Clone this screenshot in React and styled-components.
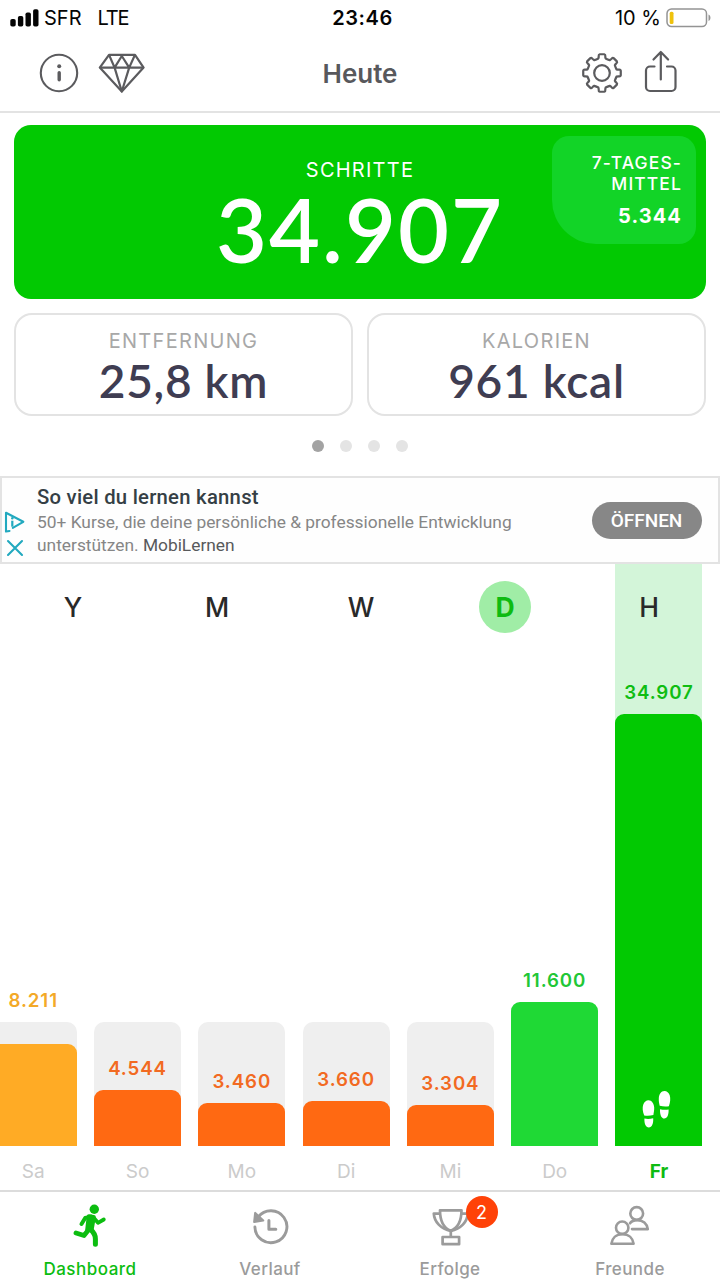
import React from "react";
import styled, { createGlobalStyle } from "styled-components";

const GlobalStyle = createGlobalStyle`
  * {
    box-sizing: border-box;
  }
  body {
    margin: 0;
    background: #fff;
    font-family: Inter, "Liberation Sans", sans-serif;
  }
`;

const Screen = styled.div`
  width: 720px;
  height: 1280px;
  display: flex;
  flex-direction: column;
  overflow: hidden;
  background: #fff;
`;

const StatusBar = styled.div`
  height: 37px;
  padding: 0 8px 2px 10px;
  display: grid;
  grid-template-columns: 1fr auto 1fr;
  align-items: center;
  font-size: 20px;
  color: #050505;
`;

const StatusGroup = styled.div`
  display: flex;
  align-items: center;
  justify-content: ${(p) => (p.$end ? "flex-end" : "flex-start")};
  gap: 5px;
  svg {
    flex: none;
  }
`;

const Carrier = styled.span`
  letter-spacing: 0;
`;

const Network = styled.span`
  margin-left: 11px;
  letter-spacing: -1.2px;
`;

const Clock = styled.div`
  font-weight: 600;
  letter-spacing: 0.6px;
  padding-left: 3px;
`;

const Header = styled.header`
  height: 76px;
  padding: 0 41px 2px 38px;
  display: grid;
  grid-template-columns: 1fr auto 1fr;
  align-items: center;
  border-bottom: 2px solid #e3e3e3;
`;

const Actions = styled.div`
  display: flex;
  align-items: center;
  justify-content: ${(p) => (p.$end ? "flex-end" : "flex-start")};
  gap: ${(p) => p.$gap}px;
`;

const Title = styled.h1`
  margin: 0;
  padding-left: 3px;
  font-size: 26px;
  font-weight: 600;
  letter-spacing: 0;
  color: #58585c;
`;

const StepsCard = styled.section`
  margin: 12px 14px 0;
  height: 174px;
  padding: 11px 10px 10px;
  border-radius: 17px;
  background: #02c902;
  color: #fff;
  display: grid;
  grid-template-columns: 144px 1fr 144px;
`;

const StepsMain = styled.div`
  grid-column: 2;
  display: flex;
  flex-direction: column;
  align-items: center;
  padding-top: 22px;
`;

const StepsLabel = styled.div`
  font-size: 20px;
  line-height: 24px;
  letter-spacing: 1.25px;
`;

const StepsValue = styled.div`
  margin-top: 10px;
  font-family: Lato, sans-serif;
  font-size: 88px;
  font-weight: 600;
  line-height: 74px;
  letter-spacing: 2px;
`;

const Average = styled.div`
  height: 108px;
  padding: 16px 14px 0 0;
  border-radius: 17px 17px 17px 44px;
  background: #12d427;
  text-align: right;
  font-size: 17.5px;
  font-weight: 500;
  line-height: 21px;
  letter-spacing: 1.1px;
`;

const AverageValue = styled.div`
  margin-top: 11px;
  font-size: 20px;
  font-weight: 700;
  line-height: 23px;
  letter-spacing: 1.1px;
`;

const Stats = styled.div`
  display: grid;
  grid-template-columns: 1fr 1fr;
  gap: 14px;
  margin: 14px 14px 0;
`;

const StatCard = styled.section`
  height: 103px;
  padding-top: 14px;
  border: 2px solid #e3e3e3;
  border-radius: 18px;
  text-align: center;
`;

const StatLabel = styled.div`
  font-size: 20px;
  line-height: 24px;
  letter-spacing: 1.3px;
  color: #a8a8a8;
`;

const StatValue = styled.div`
  font-family: Lato, sans-serif;
  font-size: 46px;
  font-weight: 600;
  line-height: 56px;
  letter-spacing: 0.75px;
  color: #3f3d52;
`;

const Dots = styled.div`
  height: 60px;
  display: flex;
  align-items: center;
  justify-content: center;
  gap: 16px;
`;

const Dot = styled.span`
  width: 12px;
  height: 12px;
  border-radius: 50%;
  background: ${(p) => (p.$active ? "#a3a3a3" : "#e4e4e4")};
`;

const Ad = styled.aside`
  height: 88px;
  display: flex;
  border: 2px solid #e3e3e3;
  background: #fefefe;
  font-family: Roboto, sans-serif;
`;

const AdMarks = styled.div`
  width: 35px;
  padding: 33px 0 0 2px;
  display: flex;
  flex-direction: column;
  gap: 6px;
`;

const AdText = styled.div`
  flex: 1;
  padding-top: 7px;
  font-size: 17.35px;
  line-height: 23px;
  color: #868686;
  b {
    font-weight: 400;
    color: #58595b;
  }
`;

const AdTitle = styled.div`
  font-size: 20.3px;
  font-weight: 500;
  line-height: 24px;
  letter-spacing: 0.25px;
  padding-bottom: 2px;
  color: #353f45;
`;

const AdButton = styled.button`
  width: 110px;
  height: 37px;
  margin: 24px 16px 0 0;
  padding: 0 1px 1px 0;
  border: 0;
  border-radius: 19px;
  background: #878787;
  color: #fff;
  font: 500 19px Roboto, sans-serif;
`;

const ChartArea = styled.main`
  height: 626px;
  display: grid;
  grid-template: 582px 44px / 720px;
`;

const Columns = styled.div`
  grid-area: 1 / 1;
  display: grid;
  grid-template-columns: repeat(7, 87px);
  column-gap: 17.3px;
  margin-left: -10.3px;
`;

const Track = styled.div`
  align-self: end;
  height: ${(p) => p.$height}px;
  border-radius: ${(p) => (p.$today ? 0 : "10px 10px 0 0")};
  background: ${(p) => (p.$today ? "#d3f5d9" : "#efefef")};
  display: flex;
  flex-direction: column;
  justify-content: flex-end;
`;

const BarValue = styled.div`
  margin-bottom: 9px;
  text-align: center;
  font-size: 18.7px;
  font-weight: 600;
  line-height: 24px;
  letter-spacing: 0.9px;
  color: ${(p) => p.$color};
`;

const Bar = styled.div`
  height: ${(p) => p.$height}px;
  border-radius: 9px 9px 0 0;
  background: ${(p) => p.$color};
  display: flex;
  align-items: flex-end;
  justify-content: center;
  padding: 0 3px 17px 0;
`;

const ColumnStack = styled.div`
  display: flex;
  flex-direction: column;
  justify-content: flex-end;
  ${Track} {
    align-self: stretch;
  }
`;

const Ranges = styled.div`
  grid-area: 1 / 1;
  align-self: start;
  display: grid;
  grid-template-columns: repeat(5, 144px);
  justify-items: center;
  padding: 17px 0 0 1px;
`;

const Range = styled.div`
  width: 52px;
  height: 52px;
  border-radius: 50%;
  background: ${(p) => (p.$active ? "#a0eda6" : "transparent")};
  color: ${(p) => (p.$active ? "#0ebb12" : "#292929")};
  font-size: 26.5px;
  font-weight: ${(p) => (p.$active ? 700 : 500)};
  line-height: 53px;
  text-align: center;
`;

const Days = styled.div`
  display: grid;
  grid-template-columns: repeat(7, 87px);
  column-gap: 17.3px;
  margin-left: -10.3px;
  padding-top: 14px;
`;

const Day = styled.div`
  text-align: center;
  font-size: 19px;
  font-weight: ${(p) => (p.$active ? 700 : 400)};
  line-height: 24px;
  color: ${(p) => (p.$active ? "#0ebb12" : "#cbcbcb")};
`;

const TabBar = styled.nav`
  height: 90px;
  display: grid;
  grid-template-columns: repeat(4, 1fr);
  border-top: 2px solid #dcdcdc;
`;

const Tab = styled.div`
  display: flex;
  flex-direction: column;
  align-items: center;
  padding-top: 10px;
  color: ${(p) => (p.$active ? "#0cbd10" : "#9b9b9b")};
  font-size: 17px;
  font-weight: 500;
  line-height: 24px;
  letter-spacing: ${(p) => (p.$active ? 0.5 : 0.4)}px;
`;

const TabIcon = styled.div`
  position: relative;
  height: 55px;
`;

const Badge = styled.span`
  position: absolute;
  top: -6px;
  left: 35.5px;
  width: 32px;
  height: 32px;
  border-radius: 50%;
  background: #ff4208;
  color: #fff;
  font-size: 18px;
  font-weight: 400;
  line-height: 33px;
  letter-spacing: 0;
  text-align: center;
`;

const SignalIcon = () => (
  <svg width="29" height="18" viewBox="0 0 29 18" fill="#050505">
    <rect x="0.3" y="10" width="5.4" height="7.5" rx="1.8" />
    <rect x="7.9" y="7" width="5.4" height="10.5" rx="1.8" />
    <rect x="15.5" y="3.5" width="5.4" height="14" rx="1.8" />
    <rect x="23.1" y="0.3" width="5.4" height="17.2" rx="1.8" />
  </svg>
);

const BatteryIcon = () => (
  <svg width="46" height="20" viewBox="0 0 46 20">
    <rect x="1" y="1" width="39.5" height="17.5" rx="4.5" fill="none" stroke="#949494" strokeWidth="1.5" />
    <rect x="3.7" y="3.7" width="3.8" height="12.2" rx="1.5" fill="#efc20c" />
    <path d="M42.5 6.5c2.6 1 2.6 5.5 0 6.5z" fill="#949494" />
  </svg>
);

const InfoIcon = () => (
  <svg width="42" height="40" viewBox="0 0 42 40" fill="none" stroke="#5b5b5e">
    <circle cx="21" cy="20" r="18.2" strokeWidth="2.1" />
    <path d="M21.2 19.8v7" strokeWidth="3.4" strokeLinecap="round" />
    <circle cx="21.2" cy="13.3" r="2" fill="#5b5b5e" stroke="none" />
  </svg>
);

const DiamondIcon = () => (
  <svg width="48" height="40" viewBox="0 0 48 40" fill="none" stroke="#5b5b5e" strokeWidth="2.2" strokeLinejoin="round">
    <path d="M11 1.8h26l8.6 12.8L23.8 38.5 1.8 14.6z" />
    <path d="M1.8 14.6h43.8M11 1.8l5.6 12.8L23.8 3l7.4 11.6L37 1.8M16.6 14.6l7.2 23.9 7.4-23.9" />
  </svg>
);

const polar = (r, deg) => {
  const a = (deg * Math.PI) / 180;
  return `${(21 + r * Math.cos(a)).toFixed(2)} ${(21 + r * Math.sin(a)).toFixed(2)}`;
};

// eight teeth, every one joined to the next by a shallow valley
const gearPath =
  [0, 1, 2, 3, 4, 5, 6, 7]
    .map((i) => {
      const a = i * 45 - 90;
      return (
        `${i ? "L" : "M"}${polar(15, a - 14)} Q${polar(16, a - 11.5)} ${polar(17.3, a - 11)}` +
        ` Q${polar(18.9, a - 10.5)} ${polar(18.9, a - 7)} L${polar(18.9, a + 7)}` +
        ` Q${polar(18.9, a + 10.5)} ${polar(17.3, a + 11)} Q${polar(16, a + 11.5)} ${polar(15, a + 14)}` +
        ` Q${polar(14.6, a + 22.5)} ${polar(15, a + 31)}`
      );
    })
    .join(" ") + "Z";

const GearIcon = () => (
  <svg width="42" height="42" viewBox="0 0 42 42" fill="none" stroke="#5b5b5e" strokeWidth="2.2" strokeLinejoin="round">
    <path d={gearPath} />
    <circle cx="21" cy="21" r="7.8" />
  </svg>
);

const ShareIcon = () => (
  <svg width="36" height="46" viewBox="0 0 36 46" fill="none" stroke="#5b5b5e" strokeWidth="2.2" strokeLinecap="round" strokeLinejoin="round">
    <path d="M11.5 16.5H7a4 4 0 0 0-4 4v16.500a4 4 0 0 0 4 4h21.500a4 4 0 0 0 4-4V20.500a4 4 0 0 0-4-4H24" />
    <path d="M17.8 29.500V2M10.500 9.500L17.8 2l7.300 7.500" />
  </svg>
);

const AdChoicesIcon = () => (
  <svg width="22" height="22" viewBox="0 0 22 22" fill="none" stroke="#22a9bf" strokeWidth="2.1" strokeLinejoin="round">
    <path d="M5.500 20l-3.500.5V1.800L19.300 10.800l-10.500 6" strokeLinecap="round" />
    <path d="M8.3 9.700v6" strokeWidth="2.2" />
    <circle cx="8.300" cy="7.200" r="1.200" fill="#22a9bf" stroke="none" />
  </svg>
);

const CloseIcon = () => (
  <svg width="22" height="18" viewBox="0 0 22 18" fill="none" stroke="#22a9bf" strokeWidth="2.100" strokeLinecap="round">
    <path d="M4 2l14 14M18 2L4 16" />
  </svg>
);

const StepsIcon = () => (
  <svg width="30" height="40" viewBox="0 0 30 40" fill="#fff">
    <path d="M2.200 26.500C.6 22.500.2 18.500 1.300 15.500 2.200 12.800 4.200 11.200 6.500 11.200c3.300 0 5.500 3.300 5.700 7.300.1 3-.5 5.400-.8 7.500-3 .8-6 1-9.200.5z" />
    <path d="M2.400 29.600c2.900.5 5.900.4 8.800-.3.3 5.500-1.200 9.100-4.400 9.100-3 0-4.600-3.400-4.400-8.800z" />
    <path d="M17.700 16.800c-.5-2.300-1.100-4.600-.9-7.500C17 5.300 19 2 22.400 2c2.500 0 4.400 1.700 5.300 4.300 1 3.200.6 7-.8 11-3.200.4-6.200.3-9.200-.5z" />
    <path d="M18 20.200c2.800.7 5.700.8 8.600.4.200 5.200-1.200 8.900-4.300 8.900-3 0-4.500-3.800-4.300-9.300z" />
  </svg>
);

const RunnerIcon = () => (
  <svg width="36" height="46" viewBox="0 0 36 46" fill="none" stroke="currentColor" strokeLinecap="round" strokeLinejoin="round">
    <circle cx="22.300" cy="7.300" r="4.700" fill="currentColor" stroke="none" />
    <path d="M19 14.600l-5.800 1.400L9.500 22" strokeWidth="4" />
    <path d="M21.500 15.500l4.500 5.300 5.800-3.300" strokeWidth="3.800" />
    <path d="M17 14.500l4.500.8-2 11.500-4 1z" fill="currentColor" strokeWidth="4.600" />
    <path d="M16 28.500l-4 5-8-2.500" strokeWidth="4.800" />
    <path d="M18.500 27.500c3.500 3 5 6 4.900 9.500v5.300" strokeWidth="5" />
  </svg>
);

const HistoryIcon = () => (
  <svg width="40" height="46" viewBox="0 0 40 46" fill="none" stroke="currentColor" strokeWidth="2.900" strokeLinecap="round" strokeLinejoin="round">
    <path d="M8.200 15A16 16 0 1 1 4.900 25" />
    <path d="M5.200 11l-1 9 9-1.500z" fill="currentColor" strokeWidth="2.200" />
    <path d="M18.900 18.500v8.800h6.900" strokeWidth="3" />
  </svg>
);

const TrophyIcon = () => (
  <svg width="40" height="46" viewBox="0 0 40 46" fill="none" stroke="currentColor" strokeWidth="2.700" strokeLinejoin="round">
    <path d="M10 8.300h21.500c0 9.500-3.300 17.500-10.700 20.500C13.300 26 10 18 10 8.300z" />
    <path d="M10 11.600H3.800c.5 8.200 7 15.500 17 17.200 10-1.700 16.500-9 17-17.200h-6.300" />
    <path d="M20.800 29v6M12.600 35h16.500v7.200H12.600z" />
  </svg>
);

const FriendsIcon = () => (
  <svg width="42" height="46" viewBox="0 0 42 46" fill="none" stroke="currentColor" strokeWidth="2.600" strokeLinecap="round" strokeLinejoin="round">
    <circle cx="27.700" cy="11.500" r="6.400" />
    <path d="M21 21.300c1.500-2.200 4-3.200 7-3.200 6 0 10 3.600 10.800 9H23" />
    <circle cx="13.200" cy="25.700" r="6.200" />
    <path d="M2.400 41.700c.7-5.500 4.500-9.500 11-9.500s10.500 4 11.200 9.500z" />
  </svg>
);

const days = [
  { day: "Sa", value: "8.211", height: 102, color: "#ffab25", text: "#f3a928", over: true },
  { day: "So", value: "4.544", height: 56, color: "#ff6912", text: "#f26a22" },
  { day: "Mo", value: "3.460", height: 43, color: "#ff6912", text: "#f26a22" },
  { day: "Di", value: "3.660", height: 45, color: "#ff6912", text: "#f26a22" },
  { day: "Mi", value: "3.304", height: 41, color: "#ff6912", text: "#f26a22" },
  { day: "Do", value: "11.600", height: 144, color: "#1fd935", text: "#22c736", over: true },
  { day: "Fr", value: "34.907", height: 432, color: "#02c902", text: "#0fbd12", today: true },
];

const GOAL_HEIGHT = 124;

const tabs = [
  { name: "Dashboard", Icon: RunnerIcon, active: true },
  { name: "Verlauf", Icon: HistoryIcon },
  { name: "Erfolge", Icon: TrophyIcon, badge: 2 },
  { name: "Freunde", Icon: FriendsIcon },
];

const DayColumn = ({ item }) => {
  const bar = (
    <Bar $height={item.height} $color={item.color}>
      {item.today && <StepsIcon />}
    </Bar>
  );
  const value = <BarValue $color={item.text}>{item.value}</BarValue>;

  // the number never overlaps the goal line, it moves above the column
  if (item.over) {
    return (
      <ColumnStack>
        {value}
        <Track $height={Math.max(GOAL_HEIGHT, item.height)}>{bar}</Track>
      </ColumnStack>
    );
  }

  return (
    <Track $height={item.today ? 582 : GOAL_HEIGHT} $today={item.today}>
      {value}
      {bar}
    </Track>
  );
};

function App() {
  return (
    <Screen>
      <GlobalStyle />
      <StatusBar>
        <StatusGroup>
          <SignalIcon />
          <Carrier>SFR</Carrier>
          <Network>LTE</Network>
        </StatusGroup>
        <Clock>23:46</Clock>
        <StatusGroup $end>
          <span>10 %</span>
          <BatteryIcon />
        </StatusGroup>
      </StatusBar>

      <Header>
        <Actions $gap={18}>
          <InfoIcon />
          <DiamondIcon />
        </Actions>
        <Title>Heute</Title>
        <Actions $gap={20} $end>
          <GearIcon />
          <ShareIcon />
        </Actions>
      </Header>

      <StepsCard>
        <StepsMain>
          <StepsLabel>SCHRITTE</StepsLabel>
          <StepsValue>34.907</StepsValue>
        </StepsMain>
        <Average>
          7-TAGES-
          <br />
          MITTEL
          <AverageValue>5.344</AverageValue>
        </Average>
      </StepsCard>

      <Stats>
        <StatCard>
          <StatLabel>ENTFERNUNG</StatLabel>
          <StatValue>25,8 km</StatValue>
        </StatCard>
        <StatCard>
          <StatLabel>KALORIEN</StatLabel>
          <StatValue>961 kcal</StatValue>
        </StatCard>
      </Stats>

      <Dots>
        <Dot $active />
        <Dot />
        <Dot />
        <Dot />
      </Dots>

      <Ad>
        <AdMarks>
          <AdChoicesIcon />
          <CloseIcon />
        </AdMarks>
        <AdText>
          <AdTitle>So viel du lernen kannst</AdTitle>
          50+ Kurse, die deine persönliche &amp; professionelle Entwicklung
          <br />
          unterstützen. <b>MobiLernen</b>
        </AdText>
        <AdButton>ÖFFNEN</AdButton>
      </Ad>

      <ChartArea>
        <Columns>
          {days.map((item) => (
            <DayColumn key={item.day} item={item} />
          ))}
        </Columns>
        <Ranges>
          {["Y", "M", "W", "D", "H"].map((name) => (
            <Range key={name} $active={name === "D"}>
              {name}
            </Range>
          ))}
        </Ranges>
        <Days>
          {days.map((item) => (
            <Day key={item.day} $active={item.today}>
              {item.day}
            </Day>
          ))}
        </Days>
      </ChartArea>

      <TabBar>
        {tabs.map(({ name, Icon, active, badge }) => (
          <Tab key={name} $active={active}>
            <TabIcon>
              <Icon />
              {badge && <Badge>{badge}</Badge>}
            </TabIcon>
            {name}
          </Tab>
        ))}
      </TabBar>
    </Screen>
  );
}

export default App;
